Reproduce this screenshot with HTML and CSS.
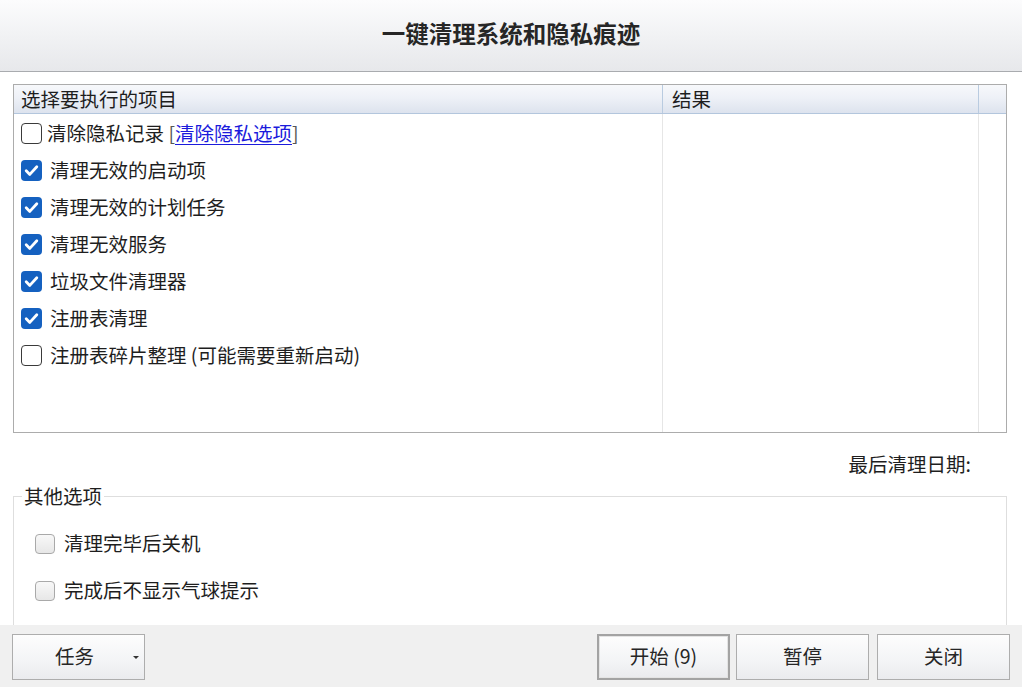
FILE: index.html
```html
<!DOCTYPE html>
<html lang="zh-CN">
<head>
<meta charset="utf-8">
<title>一键清理系统和隐私痕迹</title>
<link rel="stylesheet" href="styles.css">
</head>
<body>
<div class="window">
  <header class="titlebar">
    <h1 class="title">一键清理系统和隐私痕迹</h1>
  </header>

  <main class="content">
    <section class="list">
      <div class="list-head">
        <div class="hcell hcell-main">选择要执行的项目</div>
        <div class="hcell hcell-result">结果</div>
        <div class="hcell hcell-pad"></div>
      </div>
      <div class="list-body">
        <div class="bcol bcol-main">
          <div class="row row-first">
            <span class="cb cb-dark"></span>
            <span class="label">清除隐私记录 <span class="bracket">[</span><a class="link" href="#">清除隐私选项</a><span class="bracket">]</span></span>
          </div>
          <div class="row">
            <span class="cb cb-checked"><svg viewBox="0 0 21 21" width="21" height="21"><path d="M5.2 10.8 L8.8 14.4 L15.8 6.8" fill="none" stroke="#fff" stroke-width="2.8" stroke-linecap="round" stroke-linejoin="round"/></svg></span>
            <span class="label">清理无效的启动项</span>
          </div>
          <div class="row">
            <span class="cb cb-checked"><svg viewBox="0 0 21 21" width="21" height="21"><path d="M5.2 10.8 L8.8 14.4 L15.8 6.8" fill="none" stroke="#fff" stroke-width="2.8" stroke-linecap="round" stroke-linejoin="round"/></svg></span>
            <span class="label">清理无效的计划任务</span>
          </div>
          <div class="row">
            <span class="cb cb-checked"><svg viewBox="0 0 21 21" width="21" height="21"><path d="M5.2 10.8 L8.8 14.4 L15.8 6.8" fill="none" stroke="#fff" stroke-width="2.8" stroke-linecap="round" stroke-linejoin="round"/></svg></span>
            <span class="label">清理无效服务</span>
          </div>
          <div class="row">
            <span class="cb cb-checked"><svg viewBox="0 0 21 21" width="21" height="21"><path d="M5.2 10.8 L8.8 14.4 L15.8 6.8" fill="none" stroke="#fff" stroke-width="2.8" stroke-linecap="round" stroke-linejoin="round"/></svg></span>
            <span class="label">垃圾文件清理器</span>
          </div>
          <div class="row">
            <span class="cb cb-checked"><svg viewBox="0 0 21 21" width="21" height="21"><path d="M5.2 10.8 L8.8 14.4 L15.8 6.8" fill="none" stroke="#fff" stroke-width="2.8" stroke-linecap="round" stroke-linejoin="round"/></svg></span>
            <span class="label">注册表清理</span>
          </div>
          <div class="row">
            <span class="cb cb-dark"></span>
            <span class="label">注册表碎片整理 (可能需要重新启动)</span>
          </div>
        </div>
        <div class="bcol bcol-result"></div>
        <div class="bcol bcol-pad"></div>
      </div>
    </section>

    <div class="lastdate">最后清理日期:</div>

    <fieldset class="group">
      <legend class="group-title">其他选项</legend>
      <div class="opt">
        <span class="cb cb-light"></span>
        <span class="label">清理完毕后关机</span>
      </div>
      <div class="opt">
        <span class="cb cb-light"></span>
        <span class="label">完成后不显示气球提示</span>
      </div>
    </fieldset>
  </main>

  <footer class="footer">
    <button class="btn btn-task">任务<span class="caret"></span></button>
    <div class="actions">
      <button class="btn btn-default">开始 (9)</button>
      <button class="btn btn-pause">暂停</button>
      <button class="btn">关闭</button>
    </div>
  </footer>
</div>
</body>
</html>
```

FILE: styles.css
```css
* {
  box-sizing: border-box;
}

html, body {
  margin: 0;
  padding: 0;
  background: #ffffff;
}

body {
  width: 1022px;
  height: 687px;
  overflow: hidden;
  font-family: "Noto Sans CJK SC", "Noto Sans", "Liberation Sans", sans-serif;
  font-size: 19.5px;
  color: #1e1e1e;
}

.window {
  width: 1022px;
  height: 687px;
  display: flex;
  flex-direction: column;
}

/* Title bar */
.titlebar {
  height: 72px;
  flex: none;
  background: linear-gradient(to bottom, #fcfcfd 0%, #f1f2f4 50%, #e7e8eb 100%);
  border-bottom: 1px solid #a9abaf;
  display: flex;
  align-items: center;
  justify-content: center;
  padding-bottom: 5px;
}

.title {
  margin: 0;
  font-size: 23.5px;
  line-height: 30px;
  font-weight: 700;
  color: #262626;
}

/* Content */
.content {
  flex: 1;
  overflow: hidden;
  padding: 12px 0 0 13px;
  display: flex;
  flex-direction: column;
}

.list {
  width: 994px;
  height: 349px;
  flex: none;
  border: 1px solid #acacac;
  display: flex;
  flex-direction: column;
}

.list-head {
  height: 29px;
  flex: none;
  display: grid;
  grid-template-columns: 649px 316px 1fr;
  background: linear-gradient(to bottom, #f7f8fb 0%, #eef1f7 45%, #dde3ee 100%);
  border-bottom: 1px solid #b3c6dd;
}

.hcell {
  font-size: 19.5px;
  line-height: 27px;
  white-space: nowrap;
  color: #1e1e1e;
}

.hcell-main {
  padding-left: 7px;
  border-right: 1px solid #b9cbe0;
}

.hcell-result {
  padding-left: 9px;
  border-right: 1px solid #b9cbe0;
}

.list-body {
  flex: 1;
  display: grid;
  grid-template-columns: 649px 316px 1fr;
}

.bcol-main {
  border-right: 1px solid #e6e6e6;
  padding-top: 1px;
  padding-left: 7px;
}

.bcol-result {
  border-right: 1px solid #e6e6e6;
}

.row {
  height: 37px;
  display: flex;
  align-items: center;
  white-space: nowrap;
}

.row .label {
  margin-left: 8px;
  line-height: 26px;
  position: relative;
  top: -1px;
}

.row-first .label {
  margin-left: 5px;
}

.bracket {
  color: #555;
}

.link {
  color: #1b1bdc;
  text-decoration: underline;
  text-underline-offset: 3px;
  text-decoration-thickness: 1px;
}

/* Checkboxes */
.cb {
  width: 21px;
  height: 21px;
  flex: none;
  border-radius: 4px;
  display: inline-flex;
  align-items: center;
  justify-content: center;
}

.cb-dark {
  border: 1.5px solid #3a3a3a;
  background: #ffffff;
}

.cb-checked {
  background: #1561c0;
}

.cb-light {
  width: 20px;
  height: 20px;
  border: 1px solid #a9a9a9;
  background: linear-gradient(to bottom, #f8f8f8, #e7e7e7);
  border-radius: 4px;
}

/* Last date */
.lastdate {
  margin-top: 19px;
  height: 24px;
  line-height: 24px;
  width: 958px;
  text-align: right;
  white-space: nowrap;
  font-size: 19.5px;
}

/* Group box */
.group {
  margin: 8px 0 0 0;
  width: 994px;
  min-height: 200px;
  flex: none;
  border: 1px solid #dedede;
  padding: 0 0 0 21px;
}

.group-title {
  margin-left: -13px;
  padding: 0 2px;
  line-height: 24px;
  font-size: 19.5px;
}

.opt {
  height: 47px;
  display: flex;
  align-items: center;
  white-space: nowrap;
}

.opt:first-of-type {
  margin-top: 12px;
}

.opt .label {
  margin-left: 9px;
  line-height: 26px;
  position: relative;
  top: -1px;
}

/* Footer */
.footer {
  height: 62px;
  flex: none;
  background: #f0f0f0;
  display: flex;
  align-items: flex-start;
  justify-content: space-between;
  padding: 9px 12px 0 12px;
}

.actions {
  display: flex;
  gap: 6px;
}

.btn {
  width: 133px;
  height: 46px;
  font-family: "Noto Sans CJK SC", "Noto Sans", "Liberation Sans", sans-serif;
  font-size: 19.5px;
  line-height: 26px;
  color: #262626;
  border: 1px solid #adadad;
  border-radius: 0;
  background: linear-gradient(to bottom, #fdfdfd 0%, #f3f4f6 60%, #eaebee 100%);
  padding: 0 0 3px 0;
  position: relative;
}

.btn-default {
  border: 2px solid #a3a3a3;
  box-shadow: inset 0 0 0 1px #e4e4e4;
}

.btn-pause {
  margin-right: 2px;
}

.btn-task {
  padding-right: 8px;
}

.caret {
  position: absolute;
  right: 5px;
  top: 21px;
  width: 0;
  height: 0;
  border-left: 3px solid transparent;
  border-right: 3px solid transparent;
  border-top: 3px solid #333;
}
```
